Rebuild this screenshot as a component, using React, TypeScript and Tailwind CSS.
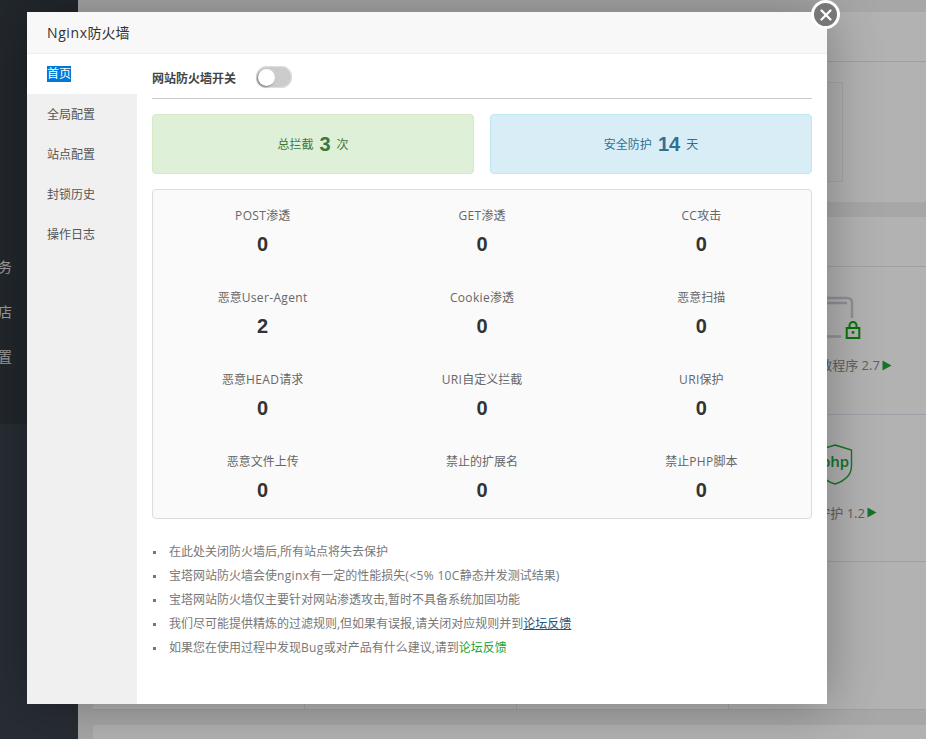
import { X } from "lucide-react";

const FONT = "font-['Open_Sans','Noto_Sans_CJK_SC',sans-serif]";

const stats: [string, number][] = [
  ["POST渗透", 0],
  ["GET渗透", 0],
  ["CC攻击", 0],
  ["恶意User-Agent", 2],
  ["Cookie渗透", 0],
  ["恶意扫描", 0],
  ["恶意HEAD请求", 0],
  ["URI自定义拦截", 0],
  ["URI保护", 0],
  ["恶意文件上传", 0],
  ["禁止的扩展名", 0],
  ["禁止PHP脚本", 0],
];

function L({ text }: { text: string }) {
  const parts = text.split(/([\x20-\x7e]+)/).filter(Boolean);
  return (
    <>
      {parts.map((p, i) =>
        /^[\x20-\x7e]+$/.test(p) && p !== "," ? (
          <span key={i} className="tracking-[0.35px] whitespace-pre">
            {p}
          </span>
        ) : (
          <span key={i}>{p}</span>
        ),
      )}
    </>
  );
}

function Triangle() {
  return (
    <svg width="10" height="11" viewBox="0 0 10 11" className="ml-[2px] inline-block">
      <path d="M0.5 0.5 L9.5 5.5 L0.5 10.5 Z" fill="#20a53a" />
    </svg>
  );
}

function MonitorLock() {
  return (
    <svg width="60" height="44" viewBox="0 0 60 44" fill="none" className="mt-[29px]">
      <path d="M6 2 H36 Q41 2 41 7 V22" stroke="#cdcdd8" strokeWidth="2.5" />
      <path d="M8 7 H36 M6 40.5 H30" stroke="#cdcdd8" strokeWidth="2.5" />
      <path d="M35.7 42 V32 H48.3 V42 Z" stroke="#0ea60e" strokeWidth="2" />
      <path d="M38.5 32 V29.5 A3.5 3.5 0 0 1 45.5 29.5 V32" stroke="#0ea60e" strokeWidth="2" />
      <circle cx="42" cy="36.5" r="1.4" fill="#0ea60e" />
    </svg>
  );
}

function PhpShield() {
  return (
    <svg width="36" height="42" viewBox="0 0 36 42" fill="none" className="mt-[29px]">
      <path d="M18 1 L34.5 6 V22 C34.5 31 27 37 18 40 C9 37 1.5 31 1.5 22 V6 Z" stroke="#20a53a" strokeWidth="1.4" />
      <text x="18" y="23" textAnchor="middle" fontSize="15" fontWeight="600" fill="#20a53a" fontFamily="Open Sans, sans-serif">php</text>
    </svg>
  );
}

function Cell({ children }: { children?: React.ReactNode }) {
  return (
    <div className="flex h-[147.5px] flex-col items-center border-r border-b border-[#e4e4f0]">
      {children}
    </div>
  );
}

function Bullet({ children }: { children: React.ReactNode }) {
  return (
    <li className="flex items-center">
      <span className="mr-[13px] ml-[1px] h-[3px] w-[3px] bg-[#777777]" />
      {children}
    </li>
  );
}

export default function App() {
  return (
    <div className={`relative flex h-[739px] w-[926px] overflow-hidden bg-[#f0f0f0] ${FONT}`}>
      {/* page behind the dialog */}
      <aside className="flex w-[78px] shrink-0 flex-col bg-[#31383f]">
        <div className="flex h-[424px] flex-col items-end gap-[27px] overflow-hidden pt-[258px] pr-[66px] text-[14px] leading-[18px] text-[#e0e0e0]">
          <div className="whitespace-nowrap">服务</div>
          <div className="whitespace-nowrap">软件商店</div>
          <div className="whitespace-nowrap">面板设置</div>
        </div>
        <div className="flex-1 bg-[#3a414b]" />
      </aside>
      <main className="flex w-[863px] shrink-0 flex-col pt-3 pl-[15px]">
        <section className="h-[190px] shrink-0 bg-white">
          <div className="h-[50px] border-b border-[#e4e4e4]" />
          <div className="mt-5 ml-[707px] h-[100px] w-[43px] border border-[#eeeeee] bg-[#fcfcfc]" />
        </section>
        <section className="mt-[15px] shrink-0 bg-white">
          <div className="h-[50px] border-b border-[#e4e4f0]" />
          <div className="grid w-[848px] grid-cols-4">
            <Cell />
            <Cell />
            <Cell />
            <Cell>
              <div className="pl-[12px]">
                <MonitorLock />
              </div>
              <div className="mt-[16px] flex items-center whitespace-nowrap pl-[3px] text-[13px] leading-[18px] text-[#888888]">
                防篡改教程序 2.7
                <Triangle />
              </div>
            </Cell>
            <Cell />
            <Cell />
            <Cell />
            <Cell>
              <PhpShield />
              <div className="mt-[18px] flex items-center whitespace-nowrap text-[13px] leading-[18px] text-[#888888]">
                PHP守护 1.2
                <Triangle />
              </div>
            </Cell>
            <Cell />
            <Cell />
            <Cell />
            <Cell />
          </div>
        </section>
        <div className="mt-[15px] flex-1 bg-white" />
      </main>

      {/* overlay */}
      <div className="absolute inset-0 bg-black/30" />

      {/* dialog */}
      <div className="absolute top-3 left-[27px] flex h-[692px] w-[800px] flex-col bg-white shadow-[1px_1px_50px_rgba(0,0,0,0.3)]">
        <div className="flex h-[42px] shrink-0 items-center border-b border-[#eeeeee] bg-[#f8f8f8] pl-5 text-[14px] text-[#333333]">
          <span className="tracking-[0.6px]">Nginx</span>防火墙
        </div>
        <div className="flex min-h-0 flex-1">
          <nav className="w-[110px] shrink-0 bg-[#f0f0f0] text-[12px] text-[#555555]">
            <div className="flex h-10 items-center bg-white pl-5">
              <span className="bg-[#0078d7] leading-4 text-white">首页</span>
            </div>
            {["全局配置", "站点配置", "封锁历史", "操作日志"].map((t) => (
              <div key={t} className="flex h-10 items-center pt-[2px] pl-5">
                {t}
              </div>
            ))}
          </nav>
          <div className="flex-1 px-[15px] pt-3">
            <div className="flex h-[33px] items-start border-b border-[#cccccc]">
              <span className="mt-[4px] w-[104px] text-[12px] leading-[17px] font-bold text-[#444444]">
                网站防火墙开关
              </span>
              <div className="flex h-[22px] w-9 items-center rounded-full bg-[#cccccc] pl-[2px] shadow-[0_0_0_1px_#dfdfdf_inset]">
                <div className="h-[17px] w-[17px] rounded-full bg-white shadow-[-1px_1px_2px_rgba(0,0,0,0.45)]" />
              </div>
            </div>
            <div className="mt-[15px] grid grid-cols-2 gap-4">
              <div className="flex h-[60px] items-center justify-center rounded border border-[#d6e9c6] bg-[#dff0d8] text-[12px] text-[#3c763d]">
                <span className="pt-[2px]">总拦截</span>
                <span className="mx-[6px] font-['Liberation_Sans',sans-serif] text-[20px] leading-none font-bold">3</span>
                <span className="pt-[2px]">次</span>
              </div>
              <div className="flex h-[60px] items-center justify-center rounded border border-[#bce8f1] bg-[#d9edf7] text-[12px] text-[#31708f]">
                <span className="pt-[2px]">安全防护</span>
                <span className="mx-[6px] font-['Liberation_Sans',sans-serif] text-[20px] leading-none font-bold">14</span>
                <span className="pt-[2px]">天</span>
              </div>
            </div>
            <div className="mt-[15px] grid h-[330px] grid-cols-3 content-start rounded border border-[#dddddd] bg-[#fafafa] pt-[16px]">
              {stats.map(([label, n]) => (
                <div key={label} className="flex h-[82px] flex-col items-center">
                  <div className="h-[20px] text-[12px] leading-[20px] text-[#666666]">
                    <L text={label} />
                  </div>
                  <div className="mt-[3px] font-['Liberation_Sans',sans-serif] text-[20px] leading-[30px] font-bold text-[#333333]">
                    {n}
                  </div>
                </div>
              ))}
            </div>
            <ul className="mt-[21px] text-[12px] leading-6 text-[#777777]">
              <Bullet>在此处关闭防火墙后,所有站点将失去保护</Bullet>
              <Bullet>
                <L text="宝塔网站防火墙会使nginx有一定的性能损失(<5% 10C静态并发测试结果)" />
              </Bullet>
              <Bullet>宝塔网站防火墙仅主要针对网站渗透攻击,暂时不具备系统加固功能</Bullet>
              <Bullet>
                我们尽可能提供精炼的过滤规则,但如果有误报,请关闭对应规则并到
                <a className="text-[#23527c] underline">论坛反馈</a>
              </Bullet>
              <Bullet>
                <L text="如果您在使用过程中发现Bug或对产品有什么建议," />
                请到
                <a className="text-[#20a53a]">论坛反馈</a>
              </Bullet>
            </ul>
          </div>
        </div>
        <div className="absolute top-[-12px] left-[784px] flex h-[29px] w-[29px] items-center justify-center rounded-full border-[3px] border-white bg-[#777777]">
          <X size={18} strokeWidth={3} className="text-white" />
        </div>
      </div>
    </div>
  );
}
